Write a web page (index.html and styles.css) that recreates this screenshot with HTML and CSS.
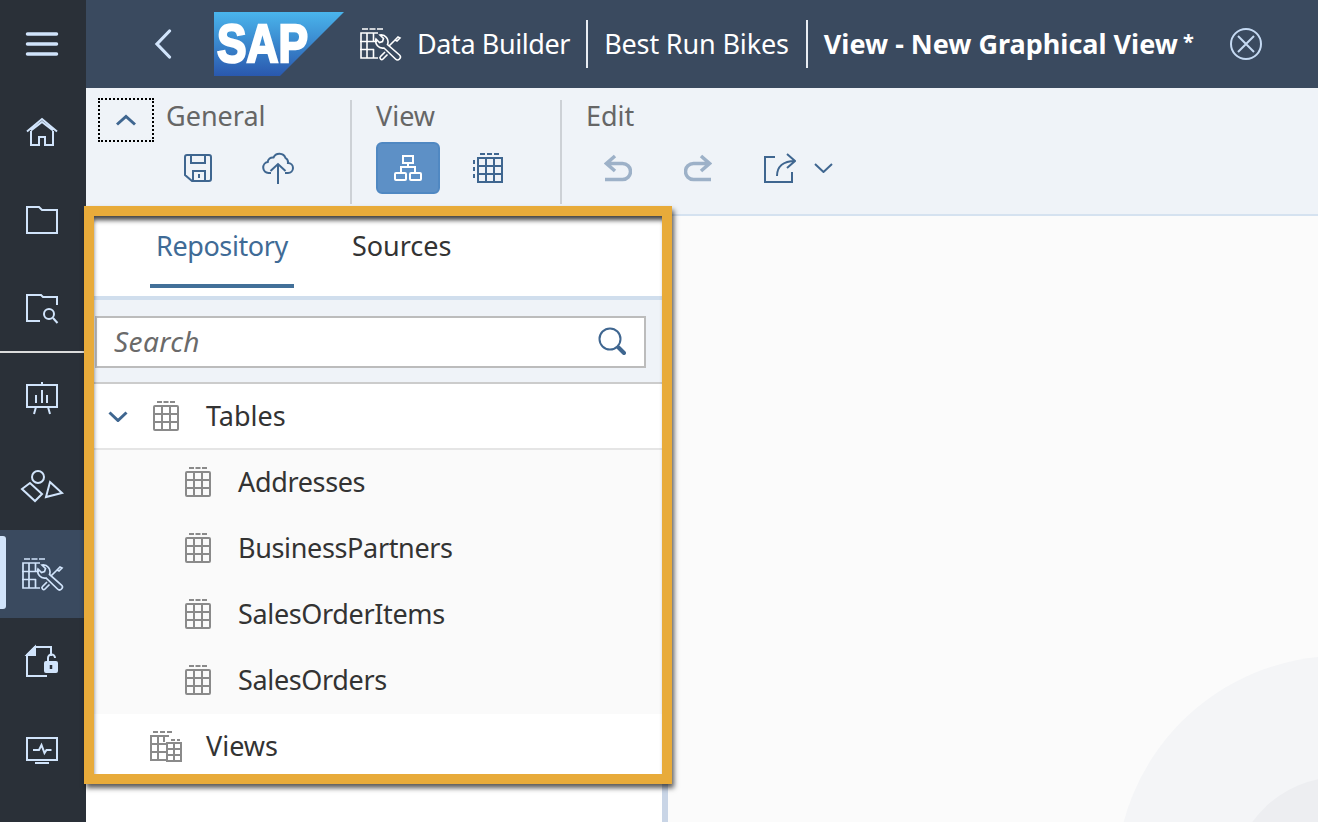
FILE: index.html
```html
<!DOCTYPE html>
<html>
<head>
    <title>Data Builder - New Graphical View</title>
    <link rel="stylesheet" href="styles.css">
</head>
<body>
    <!-- Shared icons -->
    <svg class="defs" width="0" height="0">
        <defs>
            <symbol id="i-table" viewBox="0 0 26 30">
                <path d="M4 1h5M10.500 1h5M17 1h5"/>
                <rect x="1" y="5" width="24" height="24" rx="1"/>
                <path d="M9 5v24M17 5v24M1 13h24M1 21h24"/>
            </symbol>
            <symbol id="i-builder" viewBox="0 0 44 44">
                <path d="M4 7h6M11.500 7h6M19 7h6"/>
                <path d="M20 11H3v25h17M2 19.500h17M2 27.500h14M9 11v25M15.500 11v9M15.500 27v9"/>
                <path d="M18 17l3.500 3.500 3-1 1-3L22 13a7 7 0 0 1 7.500 9.500L41.500 33a2.600 2.600 0 0 1-4 4L26 26a7 7 0 0 1-8-9z"/>
                <path d="M31 24l6-6M37 18l3-3 2 1-3 3zM27 30l-4.500 4.500a1.700 1.700 0 0 0 2.500 2.500l4.500-4.500"/>
            </symbol>
        </defs>
    </svg>

    <nav class="sidenav">
        <a class="nav-item">
            <svg class="nav-icon" viewBox="0 0 44 44"><path class="thick" d="M7.500 12h29M7.500 22h29M7.500 32h29"/></svg>
        </a>
        <a class="nav-item">
            <svg class="nav-icon" viewBox="0 0 44 44"><path d="M7 21.500L22 9l15 12.500M11 21v14h8v-8h6v8h8V21M11 20.500L22 12l11 8.500"/></svg>
        </a>
        <a class="nav-item">
            <svg class="nav-icon" viewBox="0 0 44 44"><path d="M7 35V9h12l3 3h15v23z"/></svg>
        </a>
        <a class="nav-item">
            <svg class="nav-icon" viewBox="0 0 44 44"><path d="M20 35H7V9h14l2 2h14v8"/><circle cx="29" cy="28" r="5"/><path d="M33 32l4.500 5"/></svg>
        </a>
        <div class="nav-sep"></div>
        <a class="nav-item">
            <svg class="nav-icon" viewBox="0 0 44 44"><path d="M7 11h30v22H7zM22 8v3M16 33l-2 7M28 33l2 7M16 29v-8M22 29V16M27 29v-8"/></svg>
        </a>
        <a class="nav-item">
            <svg class="nav-icon" viewBox="0 0 44 44"><circle cx="18" cy="15" r="6"/><path d="M2 27l8-6 12 11-7 7zM30 20l12 11-16 4z"/></svg>
        </a>
        <a class="nav-item nav-item-active">
            <svg class="nav-icon nav-icon-builder"><use href="#i-builder"/></svg>
        </a>
        <a class="nav-item">
            <svg class="nav-icon" viewBox="0 0 44 44">
                <path d="M31 18V9H15l-8 8v21h20"/>
                <path class="solid" d="M15 9v8H7z"/>
                <path d="M28 24v-4a3.500 3.500 0 0 1 7 0"/>
                <rect class="solid" x="25" y="24" width="12" height="10" rx="1"/>
                <path class="keyhole" d="M31 27v4"/>
            </svg>
        </a>
        <a class="nav-item">
            <svg class="nav-icon" viewBox="0 0 44 44"><path d="M7 12h30v22H7zM15 37h14M13 24h6l2.500-5 3 8 2-3h5"/></svg>
        </a>
    </nav>

    <div class="main">
        <header class="shell">
            <svg class="back" viewBox="0 0 18 30"><path d="M15.500 2L3 15l12.500 13"/></svg>
            <svg class="logo" viewBox="0 0 130 64">
                <defs>
                    <linearGradient id="sap-blue" x1="0" y1="0" x2="0" y2="1">
                        <stop offset="0" stop-color="#4ab5ec"/>
                        <stop offset="1" stop-color="#2a58ae"/>
                    </linearGradient>
                </defs>
                <path fill="url(#sap-blue)" stroke="none" d="M0 0h130L66 64H0z"/>
                <text class="logo-text" x="3" y="50" textLength="91" lengthAdjust="spacingAndGlyphs">SAP</text>
            </svg>
            <svg class="shell-icon"><use href="#i-builder"/></svg>
            <span class="crumb crumb-first">Data Builder</span>
            <span class="crumb crumb-sep crumb-tenant">Best Run Bikes</span>
            <span class="crumb crumb-sep crumb-title">View - New Graphical View<span class="dirty">*</span></span>
            <svg class="close" viewBox="0 0 32 32"><circle cx="16" cy="16" r="15"/><path d="M8 8l16 16M24 8L8 24"/></svg>
        </header>

        <section class="toolbar">
            <div class="tool-group tool-group-first">
                <button class="collapse">
                    <svg width="22" height="12" viewBox="0 0 22 12"><path d="M2 10.500l9-8 9 8"/></svg>
                </button>
                <div>
                    <div class="tool-label">General</div>
                    <div class="tool-row tool-row-general">
                        <svg class="tool-icon" width="28" height="28" viewBox="0 0 28 28"><path d="M3 1h22a2 2 0 0 1 2 2v22a2 2 0 0 1-2 2H8l-7-6V3a2 2 0 0 1 2-2zM7 1v8h14V1M9 27V17h12v10M15 20v4"/></svg>
                        <svg class="tool-icon" width="32" height="32" viewBox="0 0 32 32"><path d="M9 21H6.500a5.500 5.500 0 0 1-.8-10.900A5 5 0 0 1 11.500 5.500a6.500 6.500 0 0 1 12 .5A5 5 0 0 1 26 11a5 5 0 0 1 0 10h-3M16 32V12M8.500 19L16 12l7.500 7"/></svg>
                    </div>
                </div>
            </div>
            <div class="tool-group tool-group-view">
                <div class="tool-label">View</div>
                <div class="tool-row tool-row-view">
                    <button class="toggle">
                        <svg width="28" height="26" viewBox="0 0 28 26"><path d="M9 1h10v7H9zM14 8v4M7 18v-6h14v6M2 18h9a1 1 0 0 1 1 1v5a1 1 0 0 1-1 1H2a1 1 0 0 1-1-1v-5a1 1 0 0 1 1-1zM17 18h9a1 1 0 0 1 1 1v5a1 1 0 0 1-1 1h-9a1 1 0 0 1-1-1v-5a1 1 0 0 1 1-1z"/></svg>
                    </button>
                    <svg class="tool-icon" width="30" height="30" viewBox="0 0 30 30"><path d="M7 1h5M14 1h5M21 1h5M1 7v4M1 14v4M1 21v4"/><path d="M5 5h24v24H5zM13 5v24M21 5v24M5 13h24M5 21h24"/></svg>
                </div>
            </div>
            <div class="tool-group tool-group-edit">
                <div class="tool-label">Edit</div>
                <div class="tool-row tool-row-edit">
                    <svg class="tool-icon tool-icon-off undo" width="28" height="28" viewBox="0 0 28 28"><path d="M11 2L2.500 9.500 11 17M3 9.500h15.500a8 8 0 0 1 0 16H1"/></svg>
                    <svg class="tool-icon tool-icon-off redo" width="28" height="28" viewBox="0 0 28 28"><path d="M17 2l8.500 7.500L17 17M25 9.500H9.500a8 8 0 0 0 0 16H27"/></svg>
                    <svg class="tool-icon share" width="32" height="30" viewBox="0 0 32 30"><path d="M11 4H1v25h27V19M13 23c0-9 6-15 18-15M23 1l8 7-8 7"/></svg>
                    <svg class="tool-icon more" width="19" height="10" viewBox="0 0 19 10"><path d="M1 1l8.500 8L18 1"/></svg>
                </div>
            </div>
        </section>

        <div class="workspace">
            <aside class="panel">
                <div class="tabs">
                    <div class="tab tab-active">Repository</div>
                    <div class="tab">Sources</div>
                </div>
                <div class="search-strip">
                    <div class="search">
                        <span class="search-hint">Search</span>
                        <svg class="search-icon" width="28" height="28" viewBox="0 0 28 28"><circle cx="12" cy="12" r="10.500"/><path class="search-handle" d="M20.500 20.500l5.500 5.500"/></svg>
                    </div>
                </div>
                <div class="row row-head">
                    <svg class="caret" width="20" height="11" viewBox="0 0 20 11"><path d="M1.500 1.500L10 9.500l8.500-8"/></svg>
                    <svg class="row-icon"><use href="#i-table"/></svg>
                    <span>Tables</span>
                </div>
                <div class="row row-child"><svg class="row-icon"><use href="#i-table"/></svg><span>Addresses</span></div>
                <div class="row row-child"><svg class="row-icon"><use href="#i-table"/></svg><span>BusinessPartners</span></div>
                <div class="row row-child"><svg class="row-icon"><use href="#i-table"/></svg><span>SalesOrderItems</span></div>
                <div class="row row-child"><svg class="row-icon"><use href="#i-table"/></svg><span>SalesOrders</span></div>
                <div class="row row-views">
                    <svg class="row-icon-views" width="32" height="31" viewBox="0 0 32 31"><path d="M3 1h5M10 1h5M17 1h5M19 5H1v24h15M1 13h16M1 21h15M8 5v24M14 5v6M21 9h4M27 9h3M17 12h14v18H17zM24 12v18M17 18h14M17 24h14"/></svg>
                    <span>Views</span>
                </div>
            </aside>
            <div class="splitter"></div>
            <div class="canvas">
                <div class="arc arc-outer"></div>
                <div class="arc arc-inner"></div>
            </div>
        </div>
    </div>

    <!-- Highlight frame around the repository panel -->
    <div class="highlight"></div>
</body>
</html>
```

FILE: styles.css
```css
html, body {
    margin: 0;
    height: 100%;
    overflow: hidden;
}
body {
    display: flex;
    position: relative;
    font-family: "Noto Sans", sans-serif;
    font-size: 27px;
    color: #333;
}
svg {
    fill: none;
    stroke: currentColor;
    stroke-width: 2;
    display: block;
}
.defs {
    position: absolute;
}

/* Side navigation */
.sidenav {
    width: 86px;
    flex: none;
    background: #2a3038;
    color: #d1e4fb;
}
.nav-item {
    display: flex;
    align-items: center;
    justify-content: center;
    height: 88px;
    padding-right: 2px;
    position: relative;
}
.nav-icon {
    width: 44px;
    height: 44px;
    overflow: visible;
}
.nav-icon-builder {
    stroke-width: 1.7;
}
.nav-icon .thick {
    stroke-width: 3.5;
    stroke-linecap: round;
}
.nav-icon .solid {
    fill: #d1e4fb;
}
.nav-icon .keyhole {
    stroke: #2a3038;
    stroke-width: 2.5;
}
.nav-sep {
    height: 2px;
    margin: -1px 0;
    background: #dcdcdc;
    position: relative;
}
.nav-item-active {
    background: #3a4a5f;
    margin-top: 2px;
    margin-bottom: -2px;
}
.nav-item-active::before {
    content: "";
    position: absolute;
    left: 0;
    top: 6px;
    bottom: 9px;
    width: 6px;
    border-radius: 0 3px 3px 0;
    background: #d1e4fb;
}

.main {
    flex: 1;
    display: flex;
    flex-direction: column;
    min-width: 0;
}

/* Shell header */
.shell {
    height: 88px;
    flex: none;
    display: flex;
    align-items: center;
    background: #3a4a5f;
    color: #fff;
}
.back {
    width: 18px;
    height: 30px;
    margin-left: 68px;
    color: #d1e4fb;
    stroke-width: 3.2;
    stroke-linecap: round;
}
.logo {
    width: 130px;
    height: 64px;
    margin-left: 42px;
}
.logo-text {
    font-family: "Liberation Sans", sans-serif;
    font-weight: bold;
    font-size: 54px;
    fill: #fff;
    stroke: #fff;
    stroke-width: 2.5;
}
.shell-icon {
    width: 44px;
    height: 44px;
    margin-left: 14px;
    color: #fff;
    stroke-width: 1.6;
}
.crumb {
    display: flex;
    align-items: center;
    height: 48px;
    box-sizing: border-box;
    padding-bottom: 2px;
    white-space: nowrap;
}
.crumb-first {
    margin-left: 15px;
    letter-spacing: -0.4px;
}
.crumb-sep {
    margin-left: 17px;
    padding-left: 16px;
    border-left: 2px solid #e8edf3;
}
.crumb-tenant {
    margin-left: 16px;
    letter-spacing: -0.15px;
}
.crumb-title {
    font-weight: bold;
}
.dirty {
    margin-left: 5px;
    margin-top: -3px;
    font-size: 20px;
}
.close {
    width: 32px;
    height: 32px;
    margin-left: 36px;
    color: #c5daf3;
}

/* Toolbar */
.toolbar {
    height: 128px;
    flex: none;
    box-sizing: border-box;
    padding-top: 12px;
    display: flex;
    align-items: flex-start;
    background: #eff3f8;
    border-bottom: 2px solid #d5e2f0;
    color: #3f6690;
}
.tool-group {
    height: 104px;
    box-sizing: border-box;
    border-right: 2px solid #cdd1d6;
}
.tool-group-first {
    width: 266px;
    padding-left: 12px;
    display: flex;
    gap: 12px;
}
.tool-group-view {
    width: 210px;
    padding-left: 24px;
}
.tool-group-edit {
    padding-left: 24px;
    border-right: none;
}
.collapse {
    width: 56px;
    height: 44px;
    margin-top: -2px;
    padding: 0;
    display: flex;
    align-items: center;
    justify-content: center;
    background: none;
    border: 2px dotted #000;
    color: #3f6690;
}
.collapse svg {
    stroke-width: 3;
}
.tool-label {
    height: 32px;
    line-height: 32px;
    color: #666;
}
.tool-row {
    height: 52px;
    margin-top: 10px;
    display: flex;
    align-items: center;
}
.tool-row-general {
    margin-left: 18px;
    gap: 50px;
}
.tool-row-view {
    gap: 33px;
}
.tool-row-edit {
    margin-left: 18px;
}
.tool-icon-off {
    color: #9db1c8;
    stroke-width: 3.5;
}
.redo {
    margin-left: 52px;
}
.share {
    margin-left: 52px;
}
.more {
    margin-left: 18px;
}
.toggle {
    width: 64px;
    height: 52px;
    padding: 0;
    display: flex;
    align-items: center;
    justify-content: center;
    background: #5d90c6;
    border: 2px solid #5088c2;
    border-radius: 6px;
    color: #fff;
}

/* Repository panel */
.workspace {
    flex: 1;
    display: flex;
    min-height: 0;
}
.panel {
    width: 576px;
    flex: none;
    background: #fff;
}
.tabs {
    height: 80px;
    display: flex;
    gap: 51px;
    padding-left: 64px;
    border-bottom: 4px solid #d0deed;
}
.tab {
    height: 72px;
    box-sizing: border-box;
    padding: 12px 7px 0;
    line-height: 36px;
    color: #333;
}
.tab-active {
    padding: 12px 6px 0;
    letter-spacing: -0.4px;
    color: #3f6b96;
    border-bottom: 4px solid #427099;
}
.search-strip {
    height: 84px;
    box-sizing: border-box;
    padding: 16px 16px 0 9px;
    background: #eff3f8;
    border-bottom: 2px solid #ccc;
}
.search {
    height: 52px;
    box-sizing: border-box;
    display: flex;
    align-items: center;
    justify-content: space-between;
    padding: 0 18px 2px 17px;
    background: #fff;
    border: 2px solid #bcbcbc;
}
.search-hint {
    font-size: 28px;
    font-style: italic;
    letter-spacing: 0.4px;
    color: #6a6a6a;
}
.search-icon {
    color: #3f6690;
}
.search-handle {
    stroke-width: 4;
    stroke-linecap: round;
}
.row {
    height: 66px;
    box-sizing: border-box;
    padding-bottom: 2px;
    display: flex;
    align-items: center;
    color: #333;
}
.row span {
    padding-bottom: 2px;
}
.row-icon {
    width: 26px;
    height: 30px;
    flex: none;
    color: #8a8a8a;
}
.row-icon-views {
    flex: none;
    color: #8a8a8a;
}
.row-head {
    padding-left: 22px;
    padding-bottom: 0;
    border-bottom: 2px solid #e5e5e5;
}
.caret {
    color: #3f6690;
    stroke-width: 3;
}
.row-head .row-icon {
    margin-left: 25px;
}
.row-head span {
    margin-left: 27px;
}
.row-child {
    padding-left: 99px;
    letter-spacing: -0.35px;
    background: #fafafa;
}
.row-child span {
    margin-left: 27px;
}
.row-views {
    padding-left: 64px;
}
.row-views span {
    margin-left: 24px;
}
.splitter {
    width: 6px;
    flex: none;
    background: #c9d5e6;
}

/* Canvas */
.canvas {
    flex: 1;
    position: relative;
    overflow: hidden;
    background: #fbfbfb;
}
.arc {
    position: absolute;
    border-radius: 50%;
}
.arc-outer {
    left: 448px;
    top: 440px;
    width: 448px;
    height: 448px;
    background: #f4f5f7;
}
.arc-inner {
    left: 564px;
    top: 561px;
    width: 216px;
    height: 216px;
    background: #edeef1;
}

.highlight {
    position: absolute;
    left: 84px;
    top: 206px;
    width: 568px;
    height: 558px;
    border: 10px solid #e8ab3a;
    box-shadow: 2px 4px 5px rgba(0, 0, 0, 0.65), inset 1px 6px 5px -2px rgba(0, 0, 0, 0.75);
}
```
